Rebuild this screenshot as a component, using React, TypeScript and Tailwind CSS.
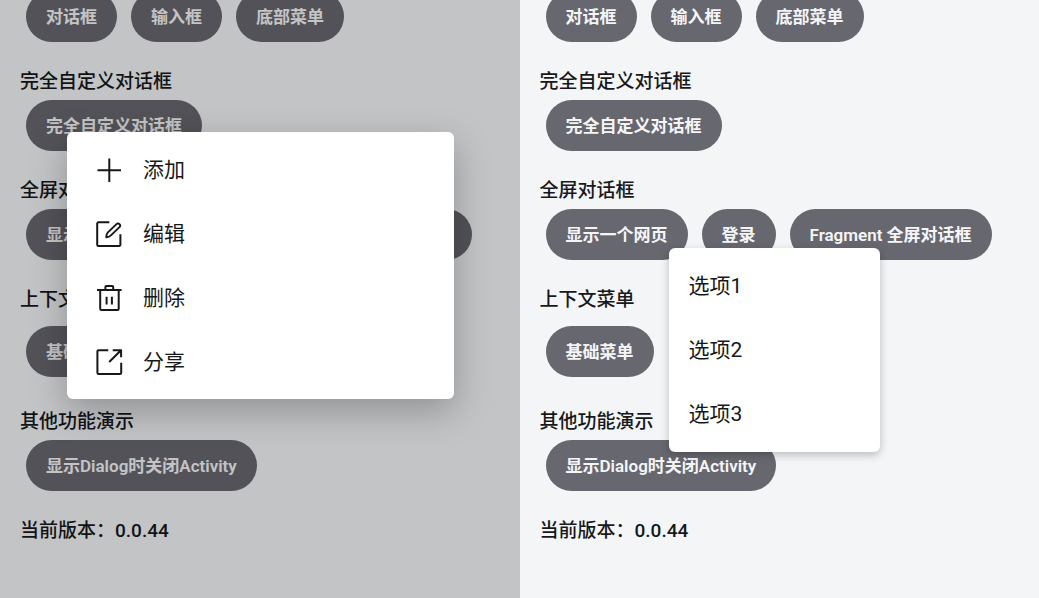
import type { ReactNode } from 'react';

type Section = {
  title: string;
  buttons: string[];
  roomy?: boolean;
};

const topButtons = ['对话框', '输入框', '底部菜单'];

const sections: Section[] = [
  { title: '完全自定义对话框', buttons: ['完全自定义对话框'] },
  { title: '全屏对话框', buttons: ['显示一个网页', '登录', 'Fragment 全屏对话框'] },
  { title: '上下文菜单', buttons: ['基础菜单'], roomy: true },
  { title: '其他功能演示', buttons: ['显示Dialog时关闭Activity'] },
];

function Icon({ children }: { children: ReactNode }) {
  return (
    <svg
      viewBox="0 0 28 28"
      className="size-7 shrink-0"
      fill="none"
      stroke="currentColor"
      strokeWidth="2"
      strokeLinejoin="round"
      aria-hidden="true"
    >
      {children}
    </svg>
  );
}

const iconItems = [
  {
    label: '添加',
    icon: (
      <Icon>
        <path d="M14.3 2.5V26M2.5 14.3H26" />
      </Icon>
    ),
  },
  {
    label: '编辑',
    icon: (
      <Icon>
        <path d="M14.3 2.3H3.4A1.2 1.2 0 0 0 2.2 3.5V24.700a1.200 1.200 0 0 0 1.200 1.200H24.200a1.200 1.200 0 0 0 1.200-1.200V14.200" />
        <path d="M11.200 17.300c.1-2 .5-3.700 1.700-4.900l8.600-8.300a2.100 2.100 0 0 1 3 3l-8.600 8.300c-1.200 1.200-2.800 1.800-4.700 1.900z" strokeWidth="1.900" />
      </Icon>
    ),
  },
  {
    label: '删除',
    icon: (
      <Icon>
        <path d="M2 6H26.600M10.400 6V3a1 1 0 0 1 1-1h5.800a1 1 0 0 1 1 1V6M5.200 6V24.700a1.200 1.200 0 0 0 1.200 1.200H22.500a1.200 1.200 0 0 0 1.200-1.200V6M11.600 12.800V20.600M16.900 12.800V20.600" />
      </Icon>
    ),
  },
  {
    label: '分享',
    icon: (
      <Icon>
        <path d="M13.300 2.200H3.600a1.200 1.200 0 0 0-1.200 1.200V24.700a1.200 1.200 0 0 0 1.200 1.200H25a1.200 1.200 0 0 0 1.200-1.200V14.700M17.700 2.200H26.100V9.200M14.200 14L26 2.300" />
      </Icon>
    ),
  },
];

const plainItems = ['选项1', '选项2', '选项3'];

function ButtonRow({ labels }: { labels: string[] }) {
  return (
    <div className="flex gap-[14px] pl-[6px]">
      {labels.map((label) => (
        <button
          key={label}
          type="button"
          className="h-[51px] shrink-0 rounded-full bg-[#67676f] px-5 pt-[2px] text-[17px] font-semibold whitespace-nowrap text-[#f5f5f7]"
        >
          {label}
        </button>
      ))}
    </div>
  );
}

function DemoPage() {
  return (
    <div className="px-5 pb-12">
      <div className="-mt-[9px]">
        <ButtonRow labels={topButtons} />
      </div>
      {sections.map((section) => (
        <section key={section.title} className={section.roomy ? 'pb-[5px]' : ''}>
          <h2 className="mt-[26px] mb-1 text-[19px] leading-7 font-medium">{section.title}</h2>
          <div className={section.roomy ? 'pt-2' : ''}>
            <ButtonRow labels={section.buttons} />
          </div>
        </section>
      ))}
      <p className="mt-[26px] text-[19px] leading-7 font-medium">当前版本：0.0.44</p>
    </div>
  );
}

export default function App() {
  return (
    <main className="grid min-h-screen grid-cols-2 bg-[#f3f5f7] font-['Roboto','Noto_Sans_CJK_SC',sans-serif] text-[#17181a]">
      <div className="relative overflow-hidden">
        <DemoPage />
        <div className="absolute inset-0 bg-black/20" />
        <div
          role="menu"
          className="absolute top-[132px] left-[67px] w-[387px] rounded-md bg-white pt-[6px] pb-[5px] shadow-[0_12px_36px_rgba(0,0,0,0.26)]"
        >
          {iconItems.map((item) => (
            <button
              key={item.label}
              type="button"
              role="menuitem"
              className="flex h-16 w-full items-center gap-5 px-7 text-[21px]"
            >
              {item.icon}
              <span className="pt-[2px]">{item.label}</span>
            </button>
          ))}
        </div>
      </div>
      <div className="relative overflow-hidden">
        <DemoPage />
        <div
          role="menu"
          className="absolute top-[248px] left-[149px] w-[211px] rounded-md bg-white py-[6px] shadow-[0_3px_8px_rgba(0,0,0,0.24)]"
        >
          {plainItems.map((label) => (
            <button
              key={label}
              type="button"
              role="menuitem"
              className="flex h-16 w-full items-center px-5 pt-[2px] text-[21px]"
            >
              {label}
            </button>
          ))}
        </div>
      </div>
    </main>
  );
}
